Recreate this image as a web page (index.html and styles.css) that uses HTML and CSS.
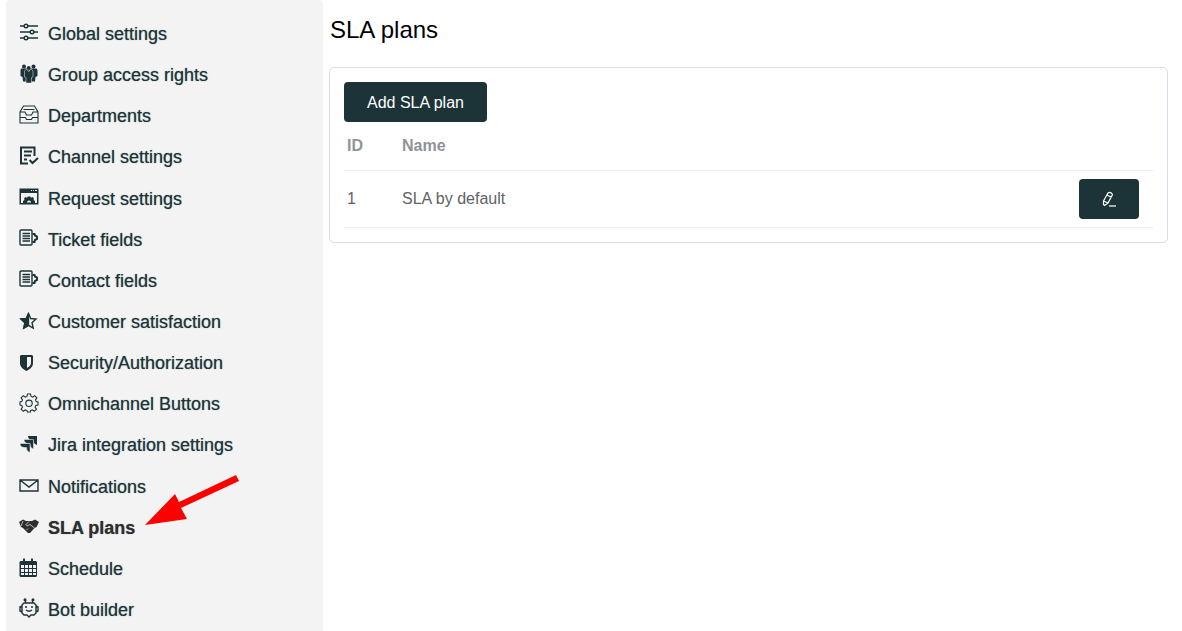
FILE: index.html
```html
<!DOCTYPE html>
<html lang="en">
<head>
  <meta charset="UTF-8">
  <meta name="viewport" content="width=device-width, initial-scale=1.0">
  <title>SLA plans</title>
  <link rel="stylesheet" href="styles.css">
</head>

<body>
  <nav class="sidebar">
    <a href="#">
      <svg class="icon line" viewBox="0 0 20 20"><path d="M1 3h4M9 3h10M1 9h10M15 9h4M1 15h4M9 15h10"/><circle cx="7" cy="3" r="1.8"/><circle cx="13" cy="9" r="1.8"/><circle cx="7" cy="15" r="1.8"/></svg>
      Global settings
    </a>
    <a href="#">
      <svg class="icon solid" viewBox="0 0 20 20"><circle cx="5" cy="2.500" r="2"/><circle cx="14.500" cy="2.500" r="2"/><path d="M2 4.500h6v13H4L3.500 13 1.500 12V6zM11.500 4.500h6l1 1.500v6l-2 1-.5 4.500h-4.500z"/><path class="cut" d="M7 5.500h5.500l1.500 1.500v6l-1.500.5v5.500H7v-5.500L5.500 13V7z"/><circle cx="9.700" cy="4" r="2"/><path class="scratch" d="M8.500 6l1.200 1.500L11 6"/></svg>
      Group access rights
    </a>
    <a href="#">
      <svg class="icon thin" viewBox="0 0 20 20"><path d="M1 7l3.500-6h11L19 7v11H1zM1 7h5l1.500 3h5L14 7h5M1 12.500h5.500l1 2h5l1-2H19M4.500 4.500h11"/></svg>
      Departments
    </a>
    <a href="#">
      <svg class="icon bold" viewBox="0 0 20 20"><path d="M9 17.500H2v-16h13.500V10M5 5.500h8M5 9.500h7M5 13.500h3M10.500 14l3 3 5.500-5"/></svg>
      Channel settings
    </a>
    <a href="#">
      <svg class="icon solid" viewBox="0 0 20 20"><path fill-rule="evenodd" d="M.5 1.500h19v16H.5zM2 6v10h2v-2l1.500-1-.5-1.500L6.500 10l1.500.8.8-1.300h2.400l.8 1.300 1.500-.8 1.500 1.500-.5 1.500L16 14v2h2V6z"/><path class="hole" d="M12 3h1v1h-1zM14 3h1v1h-1zM16 3h2v1h-2zM8 15.500a2 2 0 0 1 4 0z"/></svg>
      Request settings
    </a>
    <a href="#">
      <svg class="icon line" viewBox="0 0 20 20"><rect x="1" y="2" width="12" height="15" rx="1"/><path d="M3.500 5.500h7.500M3.500 8h7.500M3.500 10.500h7.500M3.500 13h7.500"/><path class="thick" d="M13.500 6h2l.5 1.500 2 1v2.500l-2 1-.5 2h-2"/></svg>
      Ticket fields
    </a>
    <a href="#">
      <svg class="icon line" viewBox="0 0 20 20"><rect x="1" y="2" width="12" height="15" rx="1"/><path d="M3.500 5.500h7.500M3.500 8h7.500M3.500 10.500h7.500M3.500 13h7.500"/><path class="thick" d="M13.500 6h2l.5 1.500 2 1v2.500l-2 1-.5 2h-2"/></svg>
      Contact fields
    </a>
    <a href="#">
      <svg class="icon line" viewBox="0 0 20 20"><path d="M9.500 3.500l2.200 5 5.300.6-4 3.600 1.200 5.300-4.700-2.700L4.800 18 6 12.700 2 9.100l5.300-.6z"/><path class="fill" d="M9.500 3.500v11.800L4.800 18 6 12.700 2 9.100l5.300-.6z"/></svg>
      Customer satisfaction
    </a>
    <a href="#">
      <svg class="icon solid" viewBox="0 0 20 20"><path fill-rule="evenodd" d="M1 4l1-1h11l1 1v7c0 4-3 6-6.500 8C4 17 1 15 1 11zM8 5v11c2-1 4-3 4-5V5z"/></svg>
      Security/Authorization
    </a>
    <a href="#">
      <svg class="icon thin" viewBox="0 0 20 20"><path d="M8.500 1h3l.5 2.400 1.700.7 2-1.400 2.200 2.200-1.400 2 .7 1.700L19 9v3l-2.200.4-.7 1.700 1.400 2-2.200 2.200-2-1.400-1.700.7L11.500 19h-3L8 17.600l-1.700-.7-2 1.400-2.200-2.200 1.400-2-.7-1.700L1 12V9l1.800-.4.7-1.700-1.400-2 2.200-2.200 2 1.400L8 3.400z"/><circle cx="10" cy="10.300" r="3.200"/></svg>
      Omnichannel Buttons
    </a>
    <a href="#">
      <svg class="icon solid" viewBox="0 0 20 20"><path d="M9 2h9v9q-3.500-1-3.500-4.500V6H14q-5 0-5-4z"/><path class="cut" d="M5 5.500h9.500v9.500Q11 14 11 10.500V9.500H10q-5 0-5-4z"/><path class="cut" d="M1 9.500h10v9Q7.500 17.500 7.500 14v-.5H6q-5 0-5-4z"/></svg>
      Jira integration settings
    </a>
    <a href="#">
      <svg class="icon line" viewBox="0 0 20 20"><path d="M1 5h18v11H1zM1 5l9 7 9-7"/></svg>
      Notifications
    </a>
    <a href="#" class="active" aria-current="page">
      <svg class="icon solid" viewBox="0 0 20 20"><path d="M0 6l4-2.500L7 5h6l3-1.500L20 6l-2.500 5-2 1-4.500 5H9l-5-5-2-1z"/><path class="scratch" d="M4 5l-2 5M10 5.500L7 8.500 8 10l3-1.500 4.500 3.500M7.500 14L9 12.500"/></svg>
      SLA plans
      <svg class="arrow" viewBox="0 0 96 52" aria-hidden="true"><path d="M0 51L30 20l4 8L91 1l3 6-58 27 6 11z"/></svg>
    </a>
    <a href="#">
      <svg class="icon solid" viewBox="0 0 20 20"><path d="M1.500 4H4V2q1-1.500 2 0v2h6V2q1-1.500 2 0v2h3l1 1v14l-1 1H1.500l-1-1V5z"/><path class="hole" d="M2 8h3v3H2zM6 8h3v3H6zM10 8h3v3h-3zM14 8h3v3h-3zM2 12h3v3H2zM6 12h3v3H6zM10 12h3v3h-3zM14 12h3v3h-3zM2 16h3v2H2zM6 16h3v2H6zM10 16h3v2h-3zM14 16h3v2h-3z"/></svg>
      Schedule
    </a>
    <a href="#">
      <svg class="icon line" viewBox="0 0 20 20"><path d="M8 17l2 2 2-2h3l2-2V7l-2-2H5L3 7v8l2 2zM3 8L1 9v4l2 1M17 8l2 1v4l-2 1M6.500 5V2M13.500 5V2M6 9h2M12 9h2M7 12q3 2.500 6 0"/><circle cx="6" cy="1.800" r=".8"/><circle cx="14" cy="1.800" r=".8"/></svg>
      Bot builder
    </a>
  </nav>

  <main>
    <h1>SLA plans</h1>

    <section class="card">
      <button type="button" class="btn">Add SLA plan</button>
      <table>
        <thead>
          <tr>
            <th class="col-id">ID</th>
            <th>Name</th>
            <th></th>
          </tr>
        </thead>
        <tbody>
          <tr>
            <td>1</td>
            <td>SLA by default</td>
            <td class="actions">
              <button type="button" class="btn btn-edit" aria-label="Edit">
                <svg viewBox="0 0 16 16"><path d="M2.500 10L7 2q2.500-1.500 4.500 1.500L7 12l-3.500 2.500-1-1zM6 4l4.500 2.500M2.500 10L7 12"/><path class="underline" d="M8 15h7"/></svg>
              </button>
            </td>
          </tr>
        </tbody>
      </table>
    </section>
  </main>
</body>
</html>
```
FILE: styles.css
```css
* {
  box-sizing: border-box;
}

body {
  margin: 0;
  padding-left: 6px;
  display: flex;
  min-height: 100vh;
  background: #fff;
  font-family: "Liberation Sans", Arial, Helvetica, sans-serif;
}

/* Sidebar */
.sidebar {
  flex: none;
  width: 317px;
  padding-top: 14px;
  display: flex;
  flex-direction: column;
  justify-content: space-between;
  background: #f3f3f3;
  border-radius: 4px 4px 0 0;
}

.sidebar a {
  position: relative;
  display: flex;
  align-items: center;
  gap: 9px;
  height: 41px;
  padding-left: 13px;
  color: #1c3438;
  font-size: 18px;
  text-decoration: none;
  text-shadow: 0 0 1px rgba(28, 52, 56, 0.6);
}

.sidebar .active {
  color: #2e2e2e;
  font-weight: bold;
}

.icon {
  width: 20px;
  height: 20px;
  margin-bottom: 4px;
  fill: none;
  stroke: currentColor;
}

.line {
  stroke-width: 1.4;
}

.thin {
  stroke-width: 1.1;
}

.bold,
.thick {
  stroke-width: 2;
}

.fill {
  fill: currentColor;
}

.solid {
  fill: currentColor;
  stroke: none;
}

.solid .cut {
  stroke: #f3f3f3;
  stroke-width: 0.5;
}

.solid .hole {
  fill: #f3f3f3;
}

.solid .scratch {
  fill: none;
  stroke: #f3f3f3;
  stroke-width: 0.7;
}

.arrow {
  position: absolute;
  left: 139px;
  top: -34px;
  width: 96px;
  height: 52px;
  fill: #f00;
}

/* Content */
main {
  flex: 1;
  padding: 16px 14px 0 6px;
}

h1 {
  margin: 0 0 23px;
  padding-left: 1px;
  color: #000;
  font-size: 24px;
  font-weight: normal;
  line-height: 28px;
}

.card {
  padding: 14px;
  border: 1px solid #dcdce6;
  border-radius: 5px;
}

.btn {
  display: block;
  height: 40px;
  padding: 2px 23px 0;
  border: none;
  border-radius: 4px;
  background: #1c3438;
  color: #fff;
  font-family: inherit;
  font-size: 16px;
}

table {
  width: 100%;
  border-collapse: collapse;
  color: #606266;
  font-size: 16px;
}

th,
td {
  padding: 8px 14px 8px 3px;
  border-bottom: 1px solid #ebeef5;
  text-align: left;
}

th {
  height: 48px;
  color: #909399;
}

.col-id {
  width: 55px;
}

.actions {
  width: 77px;
}

.btn-edit {
  width: 60px;
  padding: 0;
}

.btn-edit svg {
  display: block;
  width: 16px;
  height: 16px;
  margin: 0 auto;
  fill: none;
  stroke: #fff;
  stroke-width: 1.2;
}

.btn-edit .underline {
  stroke: #a5b0b2;
  stroke-width: 2;
}
```
